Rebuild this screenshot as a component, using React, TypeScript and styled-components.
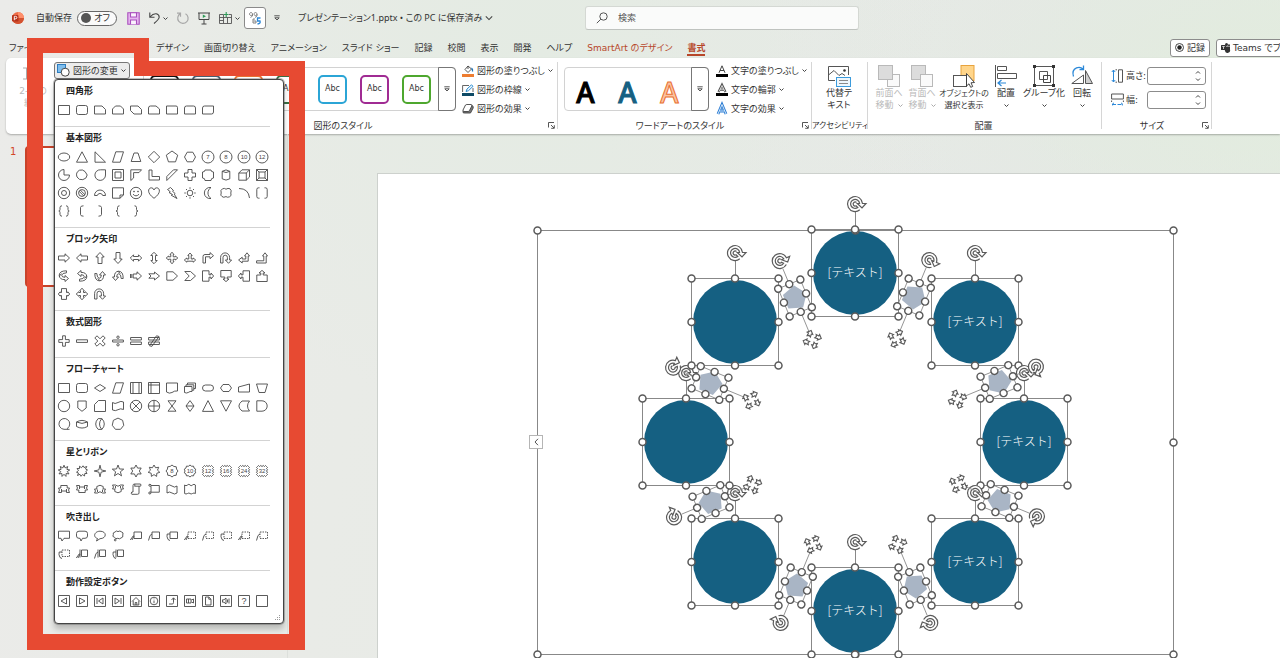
import React from "react";
import styled, { createGlobalStyle, css } from "styled-components";

const GlobalStyle = createGlobalStyle`
  *, *::before, *::after { box-sizing: border-box; }
  html, body, #root { height: 100%; }
  body {
    margin: 0;
    overflow: hidden;
    color: #333;
    font: 9px/12px "DejaVu Sans", "Noto Sans CJK JP", sans-serif;
    font-feature-settings: "palt";
  }
  button, input { font: inherit; font-feature-settings: inherit; color: inherit; }
  button { padding: 0; border: 0; background: none; cursor: pointer; }
  svg { display: block; flex: none; overflow: visible; }
`;

/* ---------- page frame ---------- */

const Page = styled.div`
  position: relative;
  display: flex;
  flex-direction: column;
  height: 100vh;
  overflow: hidden;
  background:
    radial-gradient(ellipse at 42% 8%, #e4ebe3 0%, rgba(228, 235, 227, 0) 42%),
    radial-gradient(ellipse at 100% 12%, #e2ecde 0%, rgba(226, 236, 222, 0) 26%),
    linear-gradient(100deg, #ebebe9 0%, #e8ebe6 45%, #e6e8e7 75%, #e3eae2 100%);
`;

const TitleBar = styled.header`
  display: grid;
  grid-template-columns: minmax(0, 585fr) minmax(0, 274fr) minmax(0, 421fr);
  align-items: center;
  height: 36px;
  flex: none;
`;

const TitleLeft = styled.div`
  display: flex;
  align-items: center;
  padding-left: 12px;
  white-space: nowrap;
`;

const AutoSave = styled.label`
  display: flex;
  align-items: center;
  gap: 5px;
  margin: 0 10px 0 12px;
`;

const Switch = styled.span`
  display: flex;
  align-items: center;
  justify-content: space-between;
  width: 40px;
  height: 15px;
  padding: 0 6px 0 3px;
  border: 1px solid #666;
  border-radius: 8px;
  background: #fafafa;
  input {
    appearance: none;
    width: 10px;
    height: 10px;
    margin: 0;
    border-radius: 50%;
    background: #555;
  }
`;

const QuickTools = styled.div`
  display: flex;
  align-items: center;
  gap: 9px;
`;

const IconButton = styled.button`
  display: flex;
  align-items: center;
  gap: 3px;
`;

const PressedTool = styled.button`
  display: flex;
  align-items: center;
  justify-content: center;
  width: 22px;
  height: 22px;
  margin: 0 8px 0 4px;
  border: 1px solid #8a8a8a;
  border-radius: 3px;
  background: #fff;
`;

const DocTitle = styled.button`
  display: flex;
  align-items: center;
  gap: 3px;
  margin-left: 18px;
  font-family: "Noto Sans", "Noto Sans CJK JP", sans-serif;
`;

const SearchBox = styled.label`
  display: flex;
  align-items: center;
  gap: 10px;
  height: 24px;
  padding: 0 10px;
  border: 1px solid #d4d8d3;
  border-bottom-color: #bfc3bf;
  border-radius: 3px;
  background: #fafbfa;
  input {
    flex: 1;
    min-width: 0;
    padding: 0;
    border: 0;
    outline: 0;
    background: transparent;
  }
  input::placeholder { color: #555; opacity: 1; }
`;

const TabRow = styled.nav`
  display: flex;
  align-items: center;
  height: 22px;
  flex: none;
  padding: 1px 0 0 9px;
  white-space: nowrap;
`;

const FileTab = styled.a`
  width: 147px;
  color: inherit;
  text-decoration: none;
`;

const Tabs = styled.div`
  display: flex;
  gap: 15px;
  flex: 1;
`;

const Tab = styled.a<{ $tone?: "context" | "active" }>`
  color: ${(p) => (p.$tone ? "#b7472a" : "inherit")};
  text-decoration: none;
  ${(p) =>
    p.$tone === "active" &&
    css`
      font-weight: 700;
      box-shadow: 0 2px 0 #b7472a;
    `}
`;

const TabActions = styled.div`
  display: flex;
  flex: none;
  gap: 6px;
  width: 110px;
  overflow: hidden;
`;

const OutlineButton = styled.button`
  display: flex;
  flex: none;
  align-items: center;
  gap: 3px;
  height: 18px;
  padding: 0 4px;
  border: 1px solid #8c8c8c;
  border-radius: 3px;
  background: #fff;
  white-space: nowrap;
`;

/* ---------- ribbon ---------- */

const Ribbon = styled.section`
  display: flex;
  flex: none;
  height: 76px;
  margin-left: 6px;
  border-radius: 5px 0 0 5px;
  background: #fff;
  box-shadow: 0 1px 2px rgba(0, 0, 0, 0.28);
  white-space: nowrap;
`;

const Group = styled.div<{ $w: number; $plain?: boolean }>`
  position: relative;
  display: flex;
  flex-direction: column;
  flex: none;
  width: ${(p) => p.$w}px;
  padding-top: 3px;
  &::after {
    content: "";
    position: absolute;
    top: 4px;
    right: 0;
    bottom: 5px;
    width: 1px;
    background: ${(p) => (p.$plain ? "transparent" : "#d6d6d6")};
  }
`;

const GroupBody = styled.div<{ $gap?: number; $pad?: number }>`
  display: flex;
  align-items: flex-start;
  height: 58px;
  gap: ${(p) => p.$gap ?? 6}px;
  padding: 0 0 0 ${(p) => p.$pad ?? 6}px;
`;

const GroupLabel = styled.div<{ $small?: boolean }>`
  display: flex;
  align-items: center;
  height: 13px;
  padding-right: 3px;
  font-size: ${(p) => (p.$small ? 8 : 9)}px;
  span { flex: 1; text-align: center; }
`;

const Gallery = styled.div`
  display: flex;
  height: 44px;
  margin-top: 6px;
  border: 1px solid #d2d2d2;
  border-radius: 4px;
`;

const GalleryItems = styled.div<{ $pad: number }>`
  display: flex;
  align-items: center;
  gap: 13px;
  padding: 0 8px 0 ${(p) => p.$pad}px;
`;

const Swatch = styled.button<{ $c: string }>`
  width: 29px;
  height: 29px;
  border: 2px solid ${(p) => p.$c};
  border-radius: 5px;
  background: #fff;
  font-size: 8px;
`;

const GalleryMore = styled.button`
  display: flex;
  align-items: center;
  justify-content: center;
  width: 18px;
  margin: -1px;
  border: 1px solid #777;
  border-radius: 0 4px 4px 0;
`;

const WordArt = styled.button<{ $c: string; $outline: string }>`
  width: 29px;
  padding-top: 5px;
  color: ${(p) => p.$c};
  font: 500 28px/36px "Noto Sans", sans-serif;
  -webkit-text-stroke: 1px ${(p) => p.$outline};
`;

const CommandList = styled.div`
  display: flex;
  flex-direction: column;
`;

const Command = styled.button`
  display: flex;
  align-items: center;
  gap: 3px;
  height: 19px;
`;

const BigButton = styled.button<{ $w: number; $off?: boolean; $small?: boolean }>`
  display: flex;
  flex-direction: column;
  align-items: center;
  gap: 1px;
  width: ${(p) => p.$w}px;
  padding-top: 4px;
  font-size: ${(p) => (p.$small ? 8 : 9)}px;
  line-height: 11px;
  color: ${(p) => (p.$off ? "#b9b9b9" : "inherit")};
`;

const Line = styled.span`
  display: flex;
  align-items: center;
  justify-content: center;
  gap: 4px;
  height: 11px;
`;

const ShapeEdit = styled.div`
  position: relative;
  margin-top: 1px;
`;

const ChangeShape = styled.button`
  display: flex;
  align-items: center;
  gap: 3px;
  width: 76px;
  height: 17px;
  padding: 0 3px 0 2px;
  border: 1px solid #777;
  border-radius: 3px;
  background: #ececec;
`;

const SizeRows = styled.div`
  display: grid;
  gap: 6px;
  padding-top: 6px;
`;

const SizeField = styled.label`
  display: grid;
  grid-template-columns: 13px 19px 59px;
  align-items: center;
  column-gap: 2px;
  height: 18px;
`;

const Spinner = styled.span`
  display: flex;
  align-items: center;
  height: 18px;
  padding-right: 4px;
  border: 1px solid #8c8c8c;
  border-radius: 3px;
  background: #fff;
  input { width: 100%; min-width: 0; padding: 0 4px; border: 0; outline: 0; background: none; }
`;

/* ---------- shape menu ---------- */

const Menu = styled.div`
  position: absolute;
  z-index: 3;
  top: 100%;
  left: 0;
  width: 230px;
  padding-bottom: 13px;
  border: 1px solid #444;
  border-radius: 4px;
  background: #fff;
  box-shadow: 0 0 0 1px rgba(80, 80, 80, 0.35), 0 5px 6px rgba(0, 0, 0, 0.22);
`;

const MenuSection = styled.section`
  margin-right: 13px;
  padding-bottom: 7px;
  border-bottom: 1px solid #d3d3d3;
  &:last-of-type { padding-bottom: 0; border-bottom: 0; }
`;

const MenuTitle = styled.h3`
  margin: 0;
  padding: 1px 0 0 11px;
  font-size: 9px;
  line-height: 20px;
  font-weight: 700;
  color: #222;
`;

const ShapeGrid = styled.div`
  display: grid;
  grid-template-columns: repeat(12, 18px);
  grid-auto-rows: 18px;
`;

const ShapeButton = styled.button`
  display: grid;
  place-items: center;
`;

const Grip = styled.svg`
  position: absolute;
  right: 2px;
  bottom: 2px;
`;

/* ---------- workspace ---------- */

const Workspace = styled.main`
  display: flex;
  flex: 1;
  min-height: 0;
`;

const Thumbnails = styled.aside`
  display: flex;
  gap: 9px;
  flex: none;
  width: 288px;
  padding: 12px 30px 0 10px;
  border-right: 1px solid #dde0dc;
  color: #d24726;
  font-size: 10px;
`;

const Thumb = styled.div`
  flex: 1;
  height: 141px;
  border: 2px solid #c8432a;
  border-radius: 4px;
  background: #fff;
`;

const Stage = styled.div`
  display: flex;
  flex: 1;
  min-width: 0;
  padding: 39px 0 0 89px;
`;

const Slide = styled.div`
  flex: 1;
  min-width: 0;
  overflow: hidden;
  padding: 56px 0 0 159px;
  border: solid #cdd1cd;
  border-width: 1px 0 0 1px;
  background: #fff;
`;

const Diagram = styled.div`
  position: relative;
  width: 636px;
  height: 424px;
`;

const Node = styled.div<{ $x: number; $y: number }>`
  position: absolute;
  left: ${(p) => p.$x - 42}px;
  top: ${(p) => p.$y - 42}px;
  display: flex;
  align-items: center;
  justify-content: center;
  width: 84px;
  height: 84px;
  padding-bottom: 3px;
  border-radius: 50%;
  background: #156082;
  color: #fff;
  font: 300 12px/16px "Noto Sans CJK JP", sans-serif;
  font-feature-settings: normal;
`;

const Overlay = styled.svg`
  position: absolute;
  inset: 0;
  width: 100%;
  height: 100%;
`;

const PaneHandle = styled.button`
  position: absolute;
  left: -8px;
  top: 205px;
  display: grid;
  place-items: center;
  width: 14px;
  height: 14px;
  border: 1px solid #b5b5b5;
  background: #fff;
`;

const Callout = styled.svg`
  position: absolute;
  z-index: 4;
  top: 0;
  left: 0;
  pointer-events: none;
`;

/* ---------- shape glyphs, each in a 12 x 12 box ---------- */

type Glyph = { d: string; text?: string; dash?: string; turn?: number };
const g = (d: string, text?: string): Glyph => ({ d, text });
const turned = (d: string, turn: number): Glyph => ({ d, turn });
const dashed = (d: string, dash: string): Glyph => ({ d, dash });

const pts = (list: [number, number][]) =>
  "M" + list.map(([x, y]) => x.toFixed(2) + " " + y.toFixed(2)).join("L") + "Z";
const poly = (n: number, r = 5.5, start = -90) =>
  pts(
    Array.from({ length: n }, (_, i) => {
      const a = ((start + (i * 360) / n) * Math.PI) / 180;
      return [6 + r * Math.cos(a), 6 + r * Math.sin(a)] as [number, number];
    })
  );
const star = (n: number, outer: number, inner: number) =>
  pts(
    Array.from({ length: n * 2 }, (_, i) => {
      const a = ((-90 + (i * 180) / n) * Math.PI) / 180;
      const r = i % 2 ? inner : outer;
      return [6 + r * Math.cos(a), 6 + r * Math.sin(a)] as [number, number];
    })
  );
const circle = (r: number, cx = 6, cy = 6) =>
  `M${cx - r} ${cy}a${r} ${r} 0 1 0 ${r * 2} 0a${r} ${r} 0 1 0 ${-r * 2} 0Z`;

const RECT = "M.5 1.5H11.5V10.500H.5Z";
const ROUND = "M2.5 1.500H9.500Q11.500 1.500 11.500 3.500V8.500Q11.500 10.500 9.500 10.500H2.500Q.5 10.500 .5 8.500V3.500Q.5 1.500 2.500 1.500Z";
const BOX = "M.5 .5H11.5V11.5H.5Z";
const ARROW = "M.5 4H7V1.8L11.5 6L7 10.2V8H.5Z";
const UTURN = "M.6 11V5.400A4.500 4.500 0 0 1 9.600 5.400V8H11.600L8.500 11.300L5.400 8H7.400V5.400A2.200 2.200 0 0 0 3 5.400V11Z";
const CURVED = "M8.500 .8Q1.200 .8 1.200 5.300Q1.500 9.800 7 9.600V11.500L10.500 8.500L7 5.500V7.300Q3.800 7.400 3.700 5.200Q4 3 8.500 2.800ZM1.400 6.500Q2 4 3.700 3.800";
const CALLOUT_ARROW = "M.5 .8H7V4.8H9V3L11.6 6L9 9V7.2H7V11.2H.5Z";
const RIBBON = "M2.8 2.5H9.2V5H11.5L10.5 7L11.5 9.5H8.5V8H3.5V9.5H.5L1.5 7L.5 5H2.8ZM3.5 8V6M8.5 8V6";
const ARC_RIBBON =
  "M2.800 3.500Q6 1 9.200 3.500V6H11.500L10.500 8L11.500 10H8.500Q6 7.500 3.500 10H.5L1.500 8L.5 6H2.800ZM3.500 9V6.500M8.500 9V6.500";
const WAVE = "M1 3Q3.5 .8 6 3T11 3V10Q8.5 12 6 10T1 10Z";
const SEAL =
  "M1.500 1.500L2.500 .5L3.500 1.500L4.700 .5L6 1.500L7.300 .5L8.500 1.500L9.500 .5L10.500 1.500L11.500 2.500L10.500 3.500L11.500 4.700L10.500 6L11.500 7.300L10.500 8.500L11.500 9.500L10.500 10.500L9.500 11.500L8.500 10.500L7.300 11.500L6 10.500L4.700 11.500L3.500 10.500L2.500 11.500L1.500 10.500L.5 9.500L1.500 8.500L.5 7.300L1.500 6L.5 4.700L1.500 3.500L.5 2.500Z";

const lineCallout = (kind: number) =>
  ["M.3 10L3.500 5.500M2 10L4 6", "M.5 10.500L2 5.500L4 4", "M4 4H1.2Q.4 6.5 2 9.5L4 10.5"][kind];

const SECTIONS: { title: string; glyphs: Glyph[] }[] = [
  {
    title: "四角形",
    glyphs: [
      g(RECT),
      g(ROUND),
      g("M.5 2H8L11.5 5.5V10H.5Z"),
      g("M3.5 2H8.5L11.5 5V10H.5V5Z"),
      g("M.5 2H8L11.5 5.5V10H4L.5 6.5Z"),
      g("M2.5 2H8L11.5 5V10H.5V4Q.5 2 2.5 2Z"),
      g("M.5 2H10Q11.5 2 11.5 3.5V10H.5Z"),
      g("M2.5 2H9.5Q11.5 2 11.5 4V10H.5V4Q.5 2 2.5 2Z"),
      g("M2.5 2H11.5V8Q11.5 10 9.5 10H.5V4Q.5 2 2.5 2Z"),
    ],
  },
  {
    title: "基本図形",
    glyphs: [
      g("M.3 6A5.700 4 0 1 0 11.700 6A5.700 4 0 1 0 .3 6Z"),
      g("M6 .8L11.5 11.2H.5Z"),
      g("M1 .8L11.5 11.2H1Z"),
      g("M3.8 .8H11.5L8.2 11.2H.5Z"),
      g("M4 2H8L10.8 10.5H1.2Z"),
      g("M6 .3L11.7 6L6 11.7L.3 6Z"),
      g(poly(5, 6)),
      g("M3.2 1.2H8.8L11.5 6L8.8 10.8H3.2L.5 6Z"),
      g(circle(6), "7"),
      g(circle(6), "8"),
      g(circle(6), "10"),
      g(circle(6), "12"),
      g("M6 .5A5.5 5.5 0 1 0 11.5 6H6Z"),
      g("M3.5 1.2A5.4 5.4 0 0 1 9 2.5L11.2 6A5.5 5.5 0 0 1 1 8A5.5 5.5 0 0 1 3.5 1.2Z"),
      g("M11.5 .8H6.5A5.3 5.3 0 1 0 11.5 6Z"),
      g(BOX + "M3 3H9V9H3Z"),
      g("M.8 .8H11.5L9 3.6H3.6V9L.8 11.5Z"),
      g("M1 1H4V7.5H11.5V11H1Z"),
      g("M.8 11.5V7.5L7.5 .8H11.5Z"),
      g("M4 .5H8V4H11.5V8H8V11.5H4V8H.5V4H4Z"),
      g("M3 1H9Q9 3 11.500 3V9Q9 9 9 11.500H3Q3 9 .5 9V3Q3 3 3 1Z"),
      g("M2.2 2.3Q6 -.5 9.8 2.3V9.8Q6 12.4 2.2 9.8ZM2.2 2.3Q6 4.8 9.8 2.3"),
      g("M.8 4L4 .8H11.5V8L8.3 11.2H.8ZM.8 4H8.3V11.2M8.3 4L11.5 .8"),
      g(BOX + "M3 3H9V9H3ZM.5 .5L3 3M11.5 .5L9 3M.5 11.5L3 9M11.5 11.5L9 9"),
      g(circle(5.7) + circle(2.5)),
      g(circle(5.7) + circle(3.4) + "M3 4.2L7.8 9M4.2 3L9 7.8"),
      g("M.5 8.5A5.5 5.5 0 0 1 11.5 8.5H8.7A2.8 2.8 0 0 0 3.3 8.5Z"),
      g("M.5 .8H11.5V8L8 11.2H.5ZM8 11.2V8H11.5"),
      g(circle(5.7) + circle(0.5, 4, 4.5) + circle(0.5, 8, 4.5) + "M3 7.2Q6 10.5 9 7.2"),
      g("M6 11.300C-2 5.500 .5 .8 3.300 .8Q5.300 .8 6 3Q6.700 .8 8.700 .8C11.500 .8 14 5.500 6 11.300Z"),
      g("M4.500 .5L7.500 3.500L6.500 4.200L9.200 6.600L8.300 7.200L11 11.500L5.200 8.200L6.500 7.500L3 5.500L4.300 4.800L1.500 2.500Z"),
      g(circle(2.8) + "M6 .3V1.800M6 10.200V11.700M.3 6H1.800M10.200 6H11.700M2 2L3 3M9 9L10 10M10 2L9 3M3 9L2 10"),
      g("M9 .5A5.600 5.600 0 1 0 9 11.500A6.500 6.500 0 0 1 9 .5Z"),
      g("M2.500 1.800Q4.500 .8 6 2.200Q8 .8 10 1.800Q12 3.500 10.800 6Q12 9 9.500 9.800Q7.500 10.800 6 9.600Q3.500 11 2 9.500Q0 8.500 1.200 6Q0 3 2.500 1.800Z"),
      g("M1 1.500Q10.500 1.500 11.500 11"),
      g("M3.500 .8H2.500Q.8 .8 .8 2.500V9.500Q.8 11.200 2.500 11.200H3.500M8.500 .8H9.500Q11.200 .8 11.200 2.500V9.500Q11.200 11.200 9.500 11.200H8.500"),
      g("M4 .8Q2 .8 2 2.500V4.500Q2 6 .8 6Q2 6 2 7.500V9.500Q2 11.200 4 11.200M8 .8Q10 .8 10 2.500V4.500Q10 6 11.200 6Q10 6 10 7.500V9.500Q10 11.200 8 11.200"),
      g("M7.500 .8Q4.500 .8 4.500 2.500V9.500Q4.500 11.200 7.500 11.200"),
      g("M4.500 .8Q7.500 .8 7.500 2.500V9.500Q7.500 11.200 4.500 11.200"),
      g("M7.500 .8Q5.500 .8 5.500 2.500V4.500Q5.500 6 4 6Q5.500 6 5.500 7.500V9.500Q5.500 11.200 7.500 11.200"),
      g("M4.500 .8Q6.500 .8 6.500 2.500V4.500Q6.500 6 8 6Q6.500 6 6.500 7.500V9.500Q6.500 11.200 4.500 11.200"),
    ],
  },
  {
    title: "ブロック矢印",
    glyphs: [
      g(ARROW),
      turned(ARROW, 180),
      turned(ARROW, -90),
      turned(ARROW, 90),
      g("M.3 6L3.500 2.800V4.500H8.500V2.800L11.700 6L8.500 9.200V7.500H3.500V9.200Z"),
      turned("M.3 6L3.500 2.800V4.500H8.500V2.800L11.700 6L8.500 9.200V7.500H3.500V9.200Z", 90),
      g("M6 .2L8 2.600H7.200V4.800H9.400V4L11.800 6L9.400 8V7.200H7.200V9.400H8L6 11.800L4 9.400H4.800V7.200H2.600V8L.2 6L2.600 4V4.800H4.800V2.600H4Z"),
      g("M6 1L8.200 3.500H7.200V7H9.200V6L11.700 8L9.200 10.200V9.200H2.800V10.200L.3 8L2.800 6V7H4.800V3.500H3.800Z"),
      g("M1 11V4.500Q1 2.500 3 2.500H8V.6L11.500 3.700L8 6.700V4.800H3.500V11Z"),
      g(UTURN),
      g("M9 .8L11.500 4H10.200V9.200H4.200V11L.6 8L4.200 5.200V7H7.800V4H6.500Z"),
      g("M9 .8L11.500 4H10.200V11H.6V8.800H7.800V4H6.500Z"),
      g(CURVED),
      turned(CURVED, 180),
      turned(CURVED, -90),
      turned(CURVED, 90),
      g("M.5 4V8M1.800 4V8M3.200 4V8H7V10.200L11.500 6L7 1.800V4Z"),
      g("M.8 3.800H6.500V2L11.500 6L6.500 10V8.200H.8L3 6Z"),
      g("M.8 1.800H7L11.500 6L7 10.200H.8Z"),
      g("M.8 1.500H6.500L11.500 6L6.500 10.500H.8L5.200 6Z"),
      g(CALLOUT_ARROW),
      turned(CALLOUT_ARROW, 90),
      turned(CALLOUT_ARROW, 180),
      turned(CALLOUT_ARROW, -90),
      g("M3.500 .6H8.500V4.500H9.800V3.800L11.700 6L9.800 8.200V7.500H8.500V11.400H3.500V7.500H2.200V8.200L.3 6L2.200 3.800V4.500H3.500Z"),
      g("M6 .2L8.300 2.800H7.500V4.500H9.200V3.700L11.800 6L9.200 8.300V7.500H7.500V9.200H8.300L6 11.800L3.700 9.200H4.500V7.500H2.800V8.300L.2 6L2.800 3.700V4.500H4.500V2.800H3.700Z"),
      g(UTURN),
    ],
  },
  {
    title: "数式図形",
    glyphs: [
      g("M4.600 .8H7.400V4.600H11.200V7.400H7.400V11.200H4.600V7.400H.8V4.600H4.600Z"),
      g("M.5 4.800H11.500V7.400H.5Z"),
      g("M.8 3L3 .8L6 3.800L9 .8L11.200 3L8.200 6L11.200 9L9 11.200L6 8.200L3 11.200L.8 9L3.800 6Z"),
      g("M.6 5H11.400V7H.6Z" + circle(1.2, 6, 2.2) + circle(1.2, 6, 9.8)),
      g("M.6 2.500H11.400V5H.6ZM.6 7H11.400V9.500H.6Z"),
      g("M.6 2.500H11.400V5H.6ZM.6 7H11.400V9.500H.6ZM8.500 .8L11 1.500L4 11.300L1.500 10.800Z"),
    ],
  },
  {
    title: "フローチャート",
    glyphs: [
      g(RECT),
      g(ROUND),
      g("M6 2.500L11.500 6L6 9.500L.5 6Z"),
      g("M3.800 .8H11.500L8.200 11.200H.5Z"),
      g(BOX + "M3 .5V11.500M9 .5V11.500"),
      g(BOX + "M3 .5V11.500M.5 3H11.500"),
      g("M.5 1H11.500V9Q8.500 8.500 6 10.500Q3.500 12 .5 10Z"),
      g("M.5 4.500H8V9.500Q6 9 4.200 10.500Q2.500 11.500 .5 10.500ZM2 4.500V2.800H9.800V8.200H8M3.500 2.800V1H11.500V6.500H9.800"),
      g("M3.500 3H8.500A3 3 0 0 1 8.500 9H3.500A3 3 0 0 1 3.500 3Z"),
      g("M3 2.500H9L11.500 6L9 9.500H3L.5 6Z"),
      g("M.5 5L11.500 2V10H.5Z"),
      g("M.5 2H11.500L9 10.500H3Z"),
      g(circle(5.7)),
      g("M1.800 1H10.200V8L6 11.300L1.800 8Z"),
      g("M4.500 .5H11.500V11.500H.5V4.500Z"),
      g("M.5 2.500Q3 4.500 6 2.500T11.500 2V9.500Q8.500 8 6 9.700T.5 10Z"),
      g(circle(5.700) + "M2.100 2.100L9.900 9.900M9.900 2.100L2.100 9.900"),
      g(circle(5.700) + "M6 .5V11.500M.5 6H11.500"),
      g("M2 .8H10L2 11.200H10Z"),
      g("M6 .6L10 6L6 11.400L2 6ZM2 6H10"),
      g("M6 .6L11.500 11.400H.5Z"),
      g("M.5 .8H11.500L6 11.200Z"),
      g("M4 1H11.500Q7.500 6 11.500 11H4Q-2.200 6 4 1Z"),
      g("M.8 .8H6A5.200 5.200 0 0 1 6 11.200H.8Z"),
      g("M11.500 11.300H6A5.400 5.400 0 1 1 9.500 10.300V11.300"),
      g("M.5 4Q6 .8 11.500 4V8.500Q6 11.600 .5 8.500ZM.5 4Q6 6.800 11.500 4"),
      g("M4.200 .6H7.800Q10.300 3 10.300 6T7.800 11.400H4.200Q1.700 9 1.700 6T4.200 .6ZM7.800 .6Q5.500 3 5.500 6T7.800 11.400"),
      g(poly(7, 5.9)),
    ],
  },
  {
    title: "星とリボン",
    glyphs: [
      g(star(9, 5.8, 3.3)),
      g("M1 3.500L3.500 3.500L3.500 1.200L5.500 2.700L7 .8L8 2.500L10.800 1.500L9.500 4L11.500 5L9.800 6.500L11 8.500L8.800 8.500L8.500 11L6.500 9.500L5 11.300L4 9.300L1.500 10.500L2.500 8L.5 7.200L2.500 5.500Z"),
      g(star(4, 5.8, 1.6)),
      g(star(5, 6, 2.5)),
      g(star(6, 6, 3.3)),
      g(star(7, 6, 3.6)),
      g(star(8, 6, 4.9), "8"),
      g(star(10, 6, 5), "10"),
      g(SEAL, "12"),
      g(SEAL, "16"),
      g(SEAL, "24"),
      g(SEAL, "32"),
      g(RIBBON),
      turned(RIBBON, 180),
      g(ARC_RIBBON),
      turned(ARC_RIBBON, 180),
      g("M3 9V2.500Q3 1 4.500 1H10.500Q11.500 2 10.500 3.200H9V10Q9 11.300 7.500 11.300H1.800Q.6 10.200 1.800 9H3ZM4.500 1Q5.500 2 4.500 3.200H9"),
      g("M3 10V3.200H1.800Q.6 3 .8 1.800Q2 .6 3 1.800V2.500H11.300V9.200H3.200M3 10Q2.500 11.500 1.200 11Q.4 10 1.200 9H3"),
      g(WAVE),
      g("M.6 2Q2 3.500 3.500 2T6 2T8.500 2T11.400 2V10.500Q10 9.500 8.500 10.500T6 10.500T3.500 10.500T.6 10.500Z"),
    ],
  },
  {
    title: "吹き出し",
    glyphs: [
      g("M.5 1.200H11.500V8.300H6L4 11L3 8.300H.5Z"),
      g("M3 1.200H9Q11.500 1.200 11.500 3.500V6Q11.500 8.300 9 8.300H6.500L5 11L4 8.300H3Q.5 8.300 .5 6V3.500Q.5 1.200 3 1.200Z"),
      g("M3.500 8.500C-1.500 7 .5 1.200 6 1.200C13 1.200 13 8.500 6 8.700L2.500 11Z"),
      g("M3 2Q4.500 .2 6 1.600Q8 .3 9.300 1.800Q12 2.500 10.800 5Q11.500 7.500 9 8Q7.500 9.500 5.800 8.300Q3.500 9.300 2.700 7.500Q-.3 6.500 1.300 4.700Q.5 2.500 3 2Z" + circle(0.9, 3.2, 10)),
      ...[0, 1, 2].map((k) => g(lineCallout(k) + "M4 2H11.500V8.500H4Z")),
      ...[0, 1, 2, 0, 1, 2].map((k) => dashed(lineCallout(k), "M4 2H11.500V8.500H4Z")),
      ...[0, 1, 2].map((k) => g(lineCallout(k) + "M5.500 2H11.500V8.500H5.500ZM4 1.500V9.500")),
    ],
  },
  {
    title: "動作設定ボタン",
    glyphs: [
      g(BOX + "M8.500 3V9L3 6Z"),
      g(BOX + "M3.500 3V9L9 6Z"),
      g(BOX + "M9 3V9L4.500 6ZM3 3V9"),
      g(BOX + "M3 3V9L7.500 6ZM9 3V9"),
      g(BOX + "M2 6.500L6 2.500L10 6.500M3.200 5.800V10H8.800V5.800M5.200 10V7.500H6.800V10"),
      g(BOX + circle(3.8) + "M6 5.500V8.200M6 3.600V4.300"),
      g(BOX + "M3 9H6.200Q7.500 9 7.500 7.500V3M5.500 5L7.500 2.800L9.500 5"),
      g(BOX + "M2.500 4H7V8H2.500ZM7.500 5L9.500 4V8L7.500 7M4.500 4V8"),
      g(BOX + "M3.500 2H6.800L9 4.200V10H3.500ZM6.800 2V4.200H9"),
      g(BOX + "M2.500 4.800H4L6 3V9L4 7.200H2.500ZM7.500 4.500V7.500M9 3.500V8.500"),
      { d: BOX, text: "?" },
      g(BOX),
    ],
  },
];

function ShapeGlyph({ glyph }: { glyph: Glyph }) {
  return (
    <svg width="12" height="12" viewBox="0 0 12 12" fill="none" stroke="#484848" strokeWidth="0.9">
      <path d={glyph.d} transform={glyph.turn ? `rotate(${glyph.turn} 6 6)` : undefined} />
      {glyph.dash && <path d={glyph.dash} strokeDasharray="1.5 1" />}
      {glyph.text && (
        <text
          x="6"
          y={glyph.text === "?" ? 9 : 8}
          textAnchor="middle"
          fontSize={glyph.text === "?" ? 9 : 6}
          fontFamily="Liberation Sans, sans-serif"
          fill="#484848"
          stroke="none"
        >
          {glyph.text}
        </text>
      )}
    </svg>
  );
}

/* ---------- small icons ---------- */

const Chevron = ({ size = 5, color = "#444" }: { size?: number; color?: string }) => (
  <svg width={size} height={size} viewBox="0 0 6 6" fill="none" stroke={color} strokeWidth={size > 5 ? 0.8 : 1.2}>
    <path d="M.6 1.800L3 4.200L5.400 1.800" />
  </svg>
);

const MoreMark = () => (
  <svg width="6" height="6" viewBox="0 0 6 6" fill="none" stroke="#444" strokeWidth="0.9">
    <path d="M.3 .8H5.700M.8 2.800L3 5L5.200 2.800Z" />
  </svg>
);

const Launcher = () => (
  <svg width="7" height="7" viewBox="0 0 7 7" fill="none" stroke="#444" strokeWidth="0.9">
    <path d="M.5 5.500V.5H6M3 3L6 6M6.300 3.200V6.300H3.200" />
  </svg>
);

const Logo = () => (
  <svg width="12" height="12" viewBox="0 0 12 12">
    <circle cx="6" cy="6" r="6" fill="#ed6c47" />
    <path d="M6 0A6 6 0 0 1 12 6H6Z" fill="#ff8f6b" />
    <path d="M0 6A6 6 0 0 0 12 6Z" fill="#d35230" />
    <rect x="0" y="3" width="6.500" height="6.500" rx="1" fill="#b7321a" />
    <path d="M2.300 8.200V4.300H3.600A1.200 1.200 0 0 1 3.600 6.800H2.300" fill="none" stroke="#fff" strokeWidth="0.9" />
  </svg>
);

const SaveIcon = () => (
  <svg width="13" height="13" viewBox="0 0 13 13" fill="#e6b6f0" stroke="#a94fbd" strokeWidth="1.100">
    <path d="M.8 .8H12.200V12.200H.8Z" />
    <path d="M3.500 .8H9.500V5H3.500ZM3.500 12.200V8H9.500V12.200" fill="#fbf2fd" />
  </svg>
);

const UndoIcon = () => (
  <svg width="11" height="12" viewBox="0 0 11 12" fill="none" stroke="#444" strokeWidth="1.100">
    <path d="M.8 .5V5.200H5.500M1 5Q4 1.500 7.200 1.800Q10.300 2.500 10.200 5.300Q10 7.500 5 11.500" />
  </svg>
);

const RedoIcon = () => (
  <svg width="12" height="12" viewBox="0 0 12 12" fill="none" stroke="#a8a8a8" strokeWidth="1.200">
    <path d="M8.500 1.700A5.200 5.200 0 1 1 3.500 1.600M3.500 4.800V1.200H0" />
  </svg>
);

const ShowIcon = () => (
  <svg width="12" height="13" viewBox="0 0 12 13" fill="none" stroke="#444" strokeWidth="1">
    <path d="M0 1H12M1 1V7.500H11V1M6 7.500V12M3.500 12H8.500" />
    <path d="M4.800 2.500L8 4.300L4.800 6Z" fill="#2d9a57" stroke="none" />
  </svg>
);

const LayoutIcon = () => (
  <svg width="13" height="12" viewBox="0 0 13 12" fill="none" stroke="#555" strokeWidth="0.900">
    <path d="M4.500 2.500H.5V11.500H12.500V2.500H10M.5 5.500H12.500M4.500 2.500V11.500M8.500 5.500V11.500M.5 8.500H4.500" />
    <path d="M7.200 0V5M4.800 2.500H9.600" stroke="#2d9a57" strokeWidth="1.100" />
  </svg>
);

const FillIcon = () => (
  <svg width="12" height="12" viewBox="0 0 12 12">
    <path d="M3 4.500L6 1L9.500 4L6 7.500ZM6 1V4" fill="#fff" stroke="#444" strokeWidth="0.900" />
    <path d="M9.500 3Q11 4 10.500 6.500" fill="none" stroke="#1b75bb" strokeWidth="1.300" />
    <rect y="9" width="12" height="3" fill="#ed7d31" />
  </svg>
);

const OutlineIcon = () => (
  <svg width="12" height="12" viewBox="0 0 12 12">
    <path d="M.6 8V1.500H7M11 4V8" fill="none" stroke="#555" strokeWidth="0.900" />
    <path d="M4 7.500L5 5L9.500 .8L11 2.300L6.500 6.700Z" fill="#eaf5fd" stroke="#1b83cc" strokeWidth="0.900" />
    <rect y="9" width="12" height="3" fill="#0e4a66" />
  </svg>
);

const EffectIcon = () => (
  <svg width="12" height="12" viewBox="0 0 12 12" fill="#fff" stroke="#444" strokeWidth="0.900">
    <path d="M1 8.500L4 2.500H10Q11.700 3 11.200 5L8.500 10H3Q.5 10.500 1 8.500Z" fill="#777" />
    <path d="M1 7L3.500 2Q4 1.500 5 1.500H9Q10.300 1.500 9.800 3L7.500 7.500Q7 8.500 6 8.500H2Q.5 8.500 1 7Z" />
  </svg>
);

const TextIcon = ({ kind }: { kind: "fill" | "outline" | "effect" }) => (
  <svg width="12" height="12" viewBox="0 0 12 12" fill="none">
    {kind === "fill" && <path d="M3 7.800L6 .8L9 7.800M4 5.500H8" stroke="#444" strokeWidth="1" />}
    {kind === "outline" && (
      <>
        <path d="M2.500 8L6 .8L9.500 8M4 5.800H8" stroke="#555" strokeWidth="2.200" />
        <path d="M3 7.500L6 1.500L9 7.500M4 5.800H8" stroke="#fff" strokeWidth="0.700" />
      </>
    )}
    {kind === "effect" && (
      <>
        <path d="M2 11L6 1.500L10 11M3.500 8H8.500" stroke="#2b7cd3" strokeWidth="2.800" />
        <path d="M2 11L6 1.500L10 11M3.500 8H8.500" stroke="#e2f1fd" strokeWidth="0.900" />
      </>
    )}
    {kind !== "effect" && <rect y="9" width="12" height="3" fill="#000" />}
  </svg>
);

const ChangeShapeIcon = () => (
  <svg width="13" height="13" viewBox="0 0 13 13">
    <rect x="0.500" y="0.500" width="8" height="8" fill="#7fbdec" stroke="#2b7cc0" />
    <circle cx="8.200" cy="8.200" r="4" fill="#fff" stroke="#444" />
  </svg>
);

const AltTextIcon = () => (
  <svg width="23" height="22" viewBox="0 0 23 22" fill="none" stroke="#555">
    <path d="M7 15.500H.5V1.500H20.500V10M.5 10L6 5.500L11 10.500L14 8.500L17 10.500" />
    <circle cx="16.500" cy="5.500" r="1.300" fill="#333" stroke="none" />
    <rect x="8.500" y="12.500" width="14" height="9" fill="#eef7fd" stroke="#3b9bdc" />
    <path d="M11 15.500H20M11 18.500H20" stroke="#8a8a8a" />
  </svg>
);

const FrontIcon = () => (
  <svg width="22" height="22" viewBox="0 0 22 22" stroke="#b9b9b9">
    <rect x="9.500" y="9.500" width="12" height="12" fill="#fafafa" />
    <rect x="0.500" y="0.500" width="14" height="14" fill="#dcdcdc" />
  </svg>
);

const BackIcon = () => (
  <svg width="22" height="22" viewBox="0 0 22 22" stroke="#b9b9b9">
    <rect x="0.500" y="0.500" width="14" height="14" fill="#dcdcdc" />
    <rect x="9.500" y="9.500" width="12" height="12" fill="#fafafa" />
  </svg>
);

const SelectIcon = () => (
  <svg width="22" height="22" viewBox="0 0 22 22">
    <rect x="8" y="0.500" width="13" height="15" fill="#ffd58a" stroke="#e8a33d" />
    <rect x="0.500" y="10.500" width="13" height="11" fill="#fff" stroke="#555" />
    <path d="M13.500 8.500L21.500 17.500L18 17.800L19.700 21.500L17.700 22.300L16 18.800L13.500 21Z" fill="#fff" stroke="#333" strokeWidth="0.900" />
  </svg>
);

const AlignIcon = () => (
  <svg width="22" height="22" viewBox="0 0 22 22" fill="none" stroke="#555">
    <path d="M.5 0V22M2.500 1.500H11.500V5.500H2.500ZM2.500 8.500H21.500V13.500H2.500Z" />
    <path d="M11 18H3M6.500 15L3 18L6.500 21" stroke="#2b88d8" strokeWidth="1.200" />
  </svg>
);

const GroupIcon = () => (
  <svg width="22" height="22" viewBox="0 0 22 22" fill="none" stroke="#444">
    <path d="M6.500 6.500H14.500V14.500H6.500ZM1.500 3V19M20.500 3V19M3 1.500H19M3 20.500H19" strokeWidth="0.900" />
    <path d="M10.500 10.500H17.500V17.500H10.500Z" />
    <path d="M0 0H3V3H0ZM19 0H22V3H19ZM0 19H3V22H0ZM19 19H22V22H19Z" fill="#333" stroke="none" />
  </svg>
);

const RotateIcon = () => (
  <svg width="22" height="22" viewBox="0 0 22 22" fill="none" stroke="#555">
    <path d="M12.500 18.500H.8L12.500 10Z" fill="#fff" />
    <path d="M14.500 5.500V18.500H21.500Z" fill="#cfcfcf" />
    <path d="M2.500 11.500Q.5 5 5.500 2.800Q9.500 1.500 12 4M12.500 .5V4.500H8.500" stroke="#2b88d8" strokeWidth="1.300" />
  </svg>
);

const HeightIcon = () => (
  <svg width="13" height="14" viewBox="0 0 13 14" fill="none" stroke="#555">
    <path d="M2.500 1V13M.8 3L2.500 1L4.200 3M.8 11L2.500 13L4.200 11" stroke="#2b88d8" />
    <path d="M7.500 .8H11.500V13.200H7.500ZM4.500 .8H6M4.500 13.200H6" />
  </svg>
);

const WidthIcon = () => (
  <svg width="13" height="14" viewBox="0 0 13 14" fill="none" stroke="#555">
    <path d="M.6 1H12.400V6H.6ZM.6 7.500V9M12.400 7.500V9" />
    <path d="M1 11.500H12M3 9.800L1 11.500L3 13.200M10 9.800L12 11.500L10 13.200" stroke="#2b88d8" strokeDasharray="4 1.500" />
  </svg>
);

const SpinMarks = () => (
  <svg width="6" height="14" viewBox="0 0 6 14" fill="none" stroke="#444">
    <path d="M1 4.500L3 2.500L5 4.500M1 9.500L3 11.500L5 9.500" />
  </svg>
);

/* ---------- diagram ---------- */

const NODES: { x: number; y: number; label?: string }[] = [
  { x: 318, y: 43, label: "[テキスト]" },
  { x: 438, y: 92, label: "[テキスト]" },
  { x: 487, y: 212, label: "[テキスト]" },
  { x: 438, y: 332, label: "[テキスト]" },
  { x: 318, y: 381, label: "[テキスト]" },
  { x: 198, y: 332 },
  { x: 149, y: 212 },
  { x: 198, y: 92 },
];

const LINKS = [
  { x: 377, y: 67, a: 22.5 },
  { x: 462, y: 152, a: 67.5 },
  { x: 463, y: 271, a: 112.5 },
  { x: 378, y: 356, a: 157.5 },
  { x: 259, y: 356, a: 202.5 },
  { x: 174, y: 272, a: 247.5 },
  { x: 173, y: 153, a: 292.5 },
  { x: 258, y: 68, a: 337.5 },
];

const INK = "#5a5a5a";

const Handles = ({ w, h }: { w: number; h: number }) => (
  <g fill="#fff" stroke={INK} strokeWidth="1.500">
    {[-w, 0, w].flatMap((x) =>
      [-h, 0, h].filter((y) => x || y).map((y) => <circle key={`${x},${y}`} cx={x} cy={y} r="3.500" />)
    )}
  </g>
);

const RotateHandle = ({ y }: { y: number }) => (
  <path
    transform={`translate(0 ${y})`}
    d="M4.800 5.800A7.500 7.500 0 1 1 7.500 -.5L11 -.5L7 4L2.300 -.5L4.600 -.5A4.500 4.500 0 1 0 2.800 3.500L1 1.800A2 2 0 1 1 1.500 -1.500"
    fill="#fff"
    stroke={INK}
    strokeWidth="1.200"
  />
);

const MoveMark = ({ y }: { y: number }) => (
  <g transform={`translate(0 ${y})`} fill="#fff" stroke={INK} strokeWidth="1.100">
    {[0, 90, 180, 270].map((a) => (
      <path
        key={a}
        transform={`rotate(${a}) translate(0 -6.300) rotate(45)`}
        d="M0 -3.500L3 -.5L1.500 -.3L1.800 2.800L0 1.800L-1.800 2.800L-1.500 -.3L-3 -.5Z"
      />
    ))}
  </g>
);

const PENTAGON = "M12.500 0L3.900 11.900L-10.100 7.300L-10.100 -7.300L3.900 -11.900Z";

function SelectionLayer() {
  return (
    <Overlay viewBox="0 0 636 424" fill="none" aria-hidden="true">
      {LINKS.map((l) => (
        <path key={l.a} d={PENTAGON} fill="#a9b5c5" transform={`translate(${l.x} ${l.y}) rotate(${l.a})`} />
      ))}
      <rect x="0.500" y="0.500" width="636" height="424" stroke="#888" />
      <g transform="translate(318.500 212.500)">
        <Handles w={318} h={212} />
      </g>
      {NODES.map((n) => (
        <g key={`${n.x}-${n.y}`} transform={`translate(${n.x} ${n.y})`}>
          <path d="M-43.500 -43.500H43.500V43.500H-43.500ZM.5 -43.500V-61" stroke="#888" />
          <RotateHandle y={-69} />
          <Handles w={43.5} h={43.5} />
        </g>
      ))}
      {LINKS.map((l) => (
        <g key={l.a} transform={`translate(${l.x} ${l.y}) rotate(${l.a})`}>
          <path d="M-12 -15H12V15H-12ZM0 -15V-32M0 15V37" stroke="#888" strokeWidth="0.800" />
          <RotateHandle y={-40} />
          <MoveMark y={45} />
          <Handles w={12} h={15} />
        </g>
      ))}
    </Overlay>
  );
}

/* ---------- page ---------- */

const TABS: { label: string; tone?: "context" | "active" }[] = [
  { label: "デザイン" },
  { label: "画面切り替え" },
  { label: "アニメーション" },
  { label: "スライド ショー" },
  { label: "記録" },
  { label: "校閲" },
  { label: "表示" },
  { label: "開発" },
  { label: "ヘルプ" },
  { label: "SmartArt のデザイン", tone: "context" },
  { label: "書式", tone: "active" },
];

const SWATCHES = ["#111111", "#4a5f70", "#e97132", "#3b6e44", "#2ba5d6", "#a02b93", "#4ea72e"];

function ShapeMenu() {
  return (
    <Menu role="menu">
      {SECTIONS.map((s) => (
        <MenuSection key={s.title}>
          <MenuTitle>{s.title}</MenuTitle>
          <ShapeGrid>
            {s.glyphs.map((glyph, i) => (
              <ShapeButton key={i} aria-label={`${s.title} ${i + 1}`}>
                <ShapeGlyph glyph={glyph} />
              </ShapeButton>
            ))}
          </ShapeGrid>
        </MenuSection>
      ))}
      <Grip width="6" height="6" viewBox="0 0 6 6" fill="#999">
        <path d="M4 0H5V1H4ZM4 2H5V3H4ZM4 4H5V5H4ZM2 2H3V3H2ZM2 4H3V5H2ZM0 4H1V5H0Z" />
      </Grip>
    </Menu>
  );
}

function GroupCaption({ text, launcher, small }: { text: string; launcher?: boolean; small?: boolean }) {
  return (
    <GroupLabel $small={small}>
      <span>{text}</span>
      {launcher && (
        <IconButton aria-label={`${text} 詳細`}>
          <Launcher />
        </IconButton>
      )}
    </GroupLabel>
  );
}

export default function App() {
  return (
    <Page lang="ja">
      <GlobalStyle />
      <TitleBar>
        <TitleLeft>
          <Logo />
          <AutoSave>
            自動保存
            <Switch>
              <input type="checkbox" />
              オフ
            </Switch>
          </AutoSave>
          <QuickTools>
            <IconButton aria-label="上書き保存"><SaveIcon /></IconButton>
            <IconButton aria-label="元に戻す"><UndoIcon /><Chevron /></IconButton>
            <IconButton aria-label="やり直し"><RedoIcon /></IconButton>
            <IconButton aria-label="スライド ショー開始"><ShowIcon /></IconButton>
            <IconButton aria-label="レイアウト"><LayoutIcon /><Chevron /></IconButton>
          </QuickTools>
          <PressedTool aria-label="配置番号">
            <svg width="14" height="14" viewBox="0 0 14 14" fill="none" stroke="#777">
              <path d="M4.500 3A1.500 1.500 0 1 0 4.500 3.100V5L2.500 6.500M9 3A1.500 1.500 0 1 0 9 3.100V5L7 6.500M7 8H5V12H8V10H5.500" strokeWidth="0.900" />
              <path d="M12.500 7H9.500V10H12Q13 12.500 9.500 13" stroke="#2b88d8" strokeWidth="1.300" />
            </svg>
          </PressedTool>
          <IconButton aria-label="ツール バーのカスタマイズ"><MoreMark /></IconButton>
          <DocTitle>
            プレゼンテーション1.pptx • この PC に保存済み
            <Chevron size={8} />
          </DocTitle>
        </TitleLeft>
        <SearchBox>
          <svg width="12" height="12" viewBox="0 0 12 12" fill="none" stroke="#555">
            <circle cx="7.500" cy="4.500" r="3.700" />
            <path d="M4.800 7.200L.8 11.200" />
          </svg>
          <input type="search" placeholder="検索" aria-label="検索" />
        </SearchBox>
      </TitleBar>

      <TabRow>
        <FileTab href="#file">ファイル</FileTab>
        <Tabs>
          {TABS.map((t) => (
            <Tab key={t.label} href="#tab" $tone={t.tone}>
              {t.label}
            </Tab>
          ))}
        </Tabs>
        <TabActions>
          <OutlineButton>
            <svg width="9" height="9" viewBox="0 0 9 9">
              <circle cx="4.500" cy="4.500" r="4" fill="none" stroke="#333" strokeWidth="0.900" />
              <circle cx="4.500" cy="4.500" r="2.200" fill="#222" />
            </svg>
            記録
          </OutlineButton>
          <OutlineButton>
            <svg width="9" height="9" viewBox="0 0 9 9" fill="#333">
              <circle cx="5.500" cy="1.500" r="1.500" />
              <circle cx="8" cy="2.200" r="1" />
              <path d="M3 3.500H9V6.500A2.500 2.500 0 0 1 4 8Z" />
              <rect y="2" width="5" height="5" rx="0.500" />
              <path d="M1.200 3.500H3.800M2.500 3.500V6" stroke="#fff" strokeWidth="0.700" />
            </svg>
            Teams でプレゼンテーション
          </OutlineButton>
        </TabActions>
      </TabRow>

      <Ribbon>
        <Group $w={132} $plain>
          <GroupBody $gap={2} $pad={8}>
            <BigButton $w={38} $off>
              <svg width="22" height="20" viewBox="0 0 22 20" fill="none" stroke="#aaa">
                <path d="M1 3H8M4.500 3V14M1 14H8M17 5L20 8L17 11" />
              </svg>
              <Line>2-D の</Line>
              <Line>編集</Line>
            </BigButton>
            <ShapeEdit>
              <ChangeShape aria-haspopup="menu" aria-expanded="true">
                <ChangeShapeIcon />
                図形の変更
                <Chevron />
              </ChangeShape>
              <ShapeMenu />
            </ShapeEdit>
          </GroupBody>
        </Group>

        <Group $w={420}>
          <GroupBody $pad={5}>
            <Gallery>
              <GalleryItems $pad={6}>
                {SWATCHES.map((c) => (
                  <Swatch key={c} $c={c}>Abc</Swatch>
                ))}
              </GalleryItems>
              <GalleryMore aria-label="図形のスタイルをすべて表示"><MoreMark /></GalleryMore>
            </Gallery>
            <CommandList>
              <Command><FillIcon />図形の塗りつぶし<Chevron /></Command>
              <Command><OutlineIcon />図形の枠線<Chevron /></Command>
              <Command><EffectIcon />図形の効果<Chevron /></Command>
            </CommandList>
          </GroupBody>
          <GroupCaption text="図形のスタイル" launcher />
        </Group>

        <Group $w={254}>
          <GroupBody $pad={6} $gap={7}>
            <Gallery>
              <GalleryItems $pad={6}>
                <WordArt $c="#000" $outline="#000">A</WordArt>
                <WordArt $c="#156082" $outline="#156082">A</WordArt>
                <WordArt $c="#fbc4a2" $outline="#e97132">A</WordArt>
              </GalleryItems>
              <GalleryMore aria-label="ワードアートのスタイルをすべて表示"><MoreMark /></GalleryMore>
            </Gallery>
            <CommandList>
              <Command><TextIcon kind="fill" />文字の塗りつぶし<Chevron /></Command>
              <Command><TextIcon kind="outline" />文字の輪郭<Chevron /></Command>
              <Command><TextIcon kind="effect" />文字の効果<Chevron /></Command>
            </CommandList>
          </GroupBody>
          <GroupCaption text="ワードアートのスタイル" launcher />
        </Group>

        <Group $w={56}>
          <GroupBody $pad={9}>
            <BigButton $w={36}>
              <AltTextIcon />
              <Line>代替テ</Line>
              <Line>キスト</Line>
            </BigButton>
          </GroupBody>
          <GroupCaption text="アクセシビリティ" small />
        </Group>

        <Group $w={234}>
          <GroupBody $pad={5} $gap={1}>
            <BigButton $w={32} $off>
              <FrontIcon />
              <Line>前面へ</Line>
              <Line>移動<Chevron color="#aaa" /></Line>
            </BigButton>
            <BigButton $w={32} $off>
              <BackIcon />
              <Line>背面へ</Line>
              <Line>移動<Chevron color="#aaa" /></Line>
            </BigButton>
            <BigButton $w={50} $small>
              <SelectIcon />
              <Line>オブジェクトの</Line>
              <Line>選択と表示</Line>
            </BigButton>
            <BigButton $w={32}>
              <AlignIcon />
              <Line>配置</Line>
              <Line><Chevron /></Line>
            </BigButton>
            <BigButton $w={42}>
              <GroupIcon />
              <Line>グループ化</Line>
              <Line><Chevron /></Line>
            </BigButton>
            <BigButton $w={32}>
              <RotateIcon />
              <Line>回転</Line>
              <Line><Chevron /></Line>
            </BigButton>
          </GroupBody>
          <GroupCaption text="配置" />
        </Group>

        <Group $w={110}>
          <GroupBody $pad={9}>
            <SizeRows>
              <SizeField>
                <HeightIcon />
                高さ:
                <Spinner><input /><SpinMarks /></Spinner>
              </SizeField>
              <SizeField>
                <WidthIcon />
                幅:
                <Spinner><input /><SpinMarks /></Spinner>
              </SizeField>
            </SizeRows>
          </GroupBody>
          <GroupCaption text="サイズ" launcher />
        </Group>
      </Ribbon>

      <Workspace>
        <Thumbnails>
          1
          <Thumb />
        </Thumbnails>
        <Stage>
          <Slide>
            <Diagram>
              {NODES.map((n) => (
                <Node key={`${n.x}-${n.y}`} $x={n.x} $y={n.y}>
                  {n.label}
                </Node>
              ))}
              <SelectionLayer />
              <PaneHandle aria-label="テキスト ウィンドウを開く">
                <svg width="5" height="8" viewBox="0 0 5 8" fill="none" stroke="#555">
                  <path d="M4 .8L1 4L4 7.200" />
                </svg>
              </PaneHandle>
            </Diagram>
          </Slide>
        </Stage>
      </Workspace>

      <Callout width="306" height="650" viewBox="0 0 306 650" aria-hidden="true">
        <path
          fill="#e74a32"
          fillRule="evenodd"
          d="M27 38H149V61H305V650H27ZM43 53V634H289V76H134V53Z"
        />
      </Callout>
    </Page>
  );
}
